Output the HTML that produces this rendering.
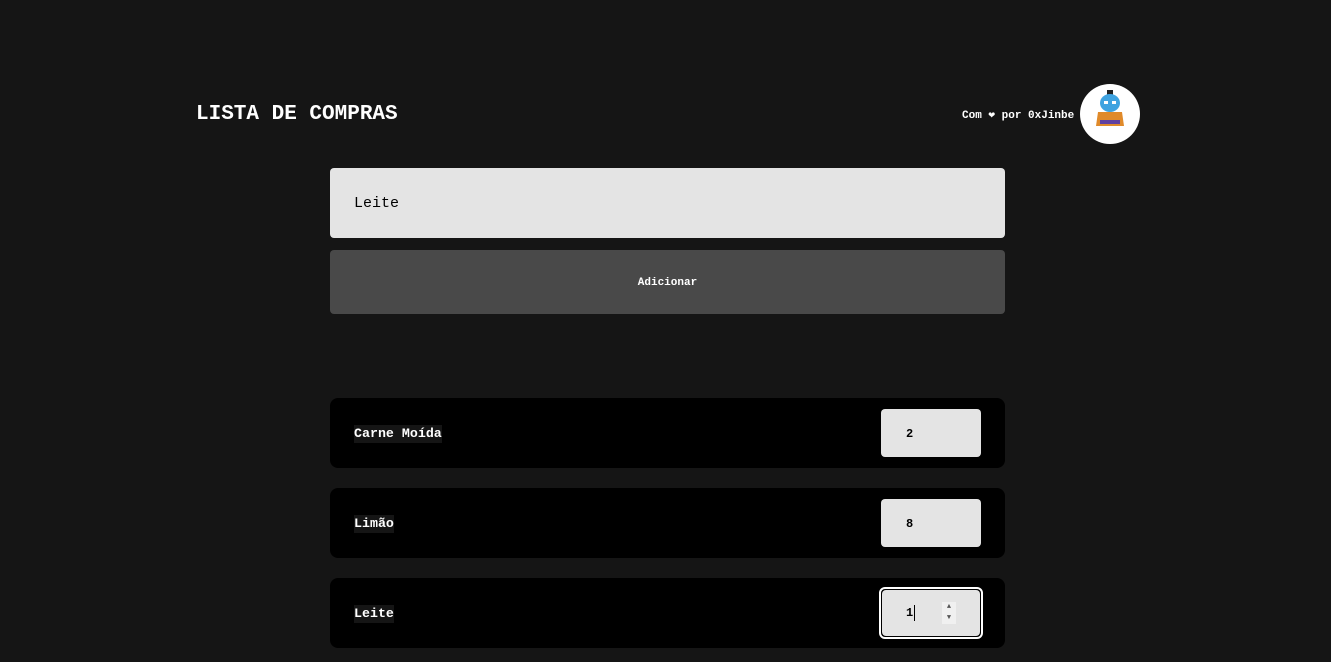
<!DOCTYPE html>
<html><head><meta charset="utf-8"><style>
body{margin:0;background:#151515;width:1331px;height:662px;overflow:hidden;font-family:"Liberation Mono","DejaVu Sans Mono",monospace;color:#fff;font-weight:bold}
.t{position:absolute;left:196px;top:101px;font-size:21px;line-height:28px}
.by{position:absolute;left:962px;top:108px;font-size:11px;line-height:16px}
.av{position:absolute;left:1080px;top:84px;width:60px;height:60px;border-radius:50%;background:#fff}
.in{position:absolute;left:330px;top:168px;width:675px;height:70px;background:#e4e4e4;border-radius:4px;color:#000;font-weight:normal;font-size:15px;box-sizing:border-box;padding-left:24px;line-height:72px}
.btn{position:absolute;left:330px;top:250px;width:675px;height:64px;background:#494949;border-radius:4px;text-align:center;line-height:66px;font-size:11px}
.row{position:absolute;left:330px;width:675px;height:70px;background:#000;border-radius:8px}
.row > span{position:absolute;left:24px;top:27px;font-size:13.3px;line-height:18px;background:#151515}
.q{position:absolute;left:551px;top:11px;width:100px;height:48px;background:#e4e4e4;border-radius:4px;color:#000;font-size:12px;line-height:50px;box-sizing:border-box;padding-left:25px}
.qf{position:absolute;left:549px;top:9px;width:104px;height:52px;border:2px solid #fff;border-radius:6px;box-sizing:border-box;background:#000}
.qi{position:absolute;left:1px;top:1px;right:1px;bottom:1px;background:#e4e4e4;border-radius:4px;color:#000;font-size:12px;line-height:46px;padding-left:24px}
.cur{display:inline-block;width:1px;height:16px;background:#000;vertical-align:middle;margin-left:1px}
.sp{position:absolute;left:60px;top:12px;width:14px;height:22px;background:#f0f0f0;font-size:7px;line-height:11px;text-align:center;color:#555}
</style></head><body>
<div class="t">LISTA DE COMPRAS</div>
<div class="by">Com ❤ por 0xJinbe</div>
<div class="av"><svg width="60" height="60" viewBox="0 0 60 60"><rect x="27" y="6" width="6" height="5" fill="#222"/><ellipse cx="30" cy="19" rx="10" ry="9" fill="#3fa3e0"/><rect x="24" y="17" width="4" height="3" fill="#fff"/><rect x="32" y="17" width="4" height="3" fill="#fff"/><path d="M18 28h24l2 14H16z" fill="#e08a2a"/><rect x="20" y="36" width="20" height="4" fill="#6040a0"/></svg></div>
<div class="in">Leite</div>
<div class="btn">Adicionar</div>
<div class="row" style="top:398px"><span>Carne Moída</span><div class="q">2</div></div>
<div class="row" style="top:488px"><span>Limão</span><div class="q">8</div></div>
<div class="row" style="top:578px"><span>Leite</span><div class="qf"><div class="qi">1<i class="cur"></i><div class="sp">▲<br>▼</div></div></div></div>
</body></html>
